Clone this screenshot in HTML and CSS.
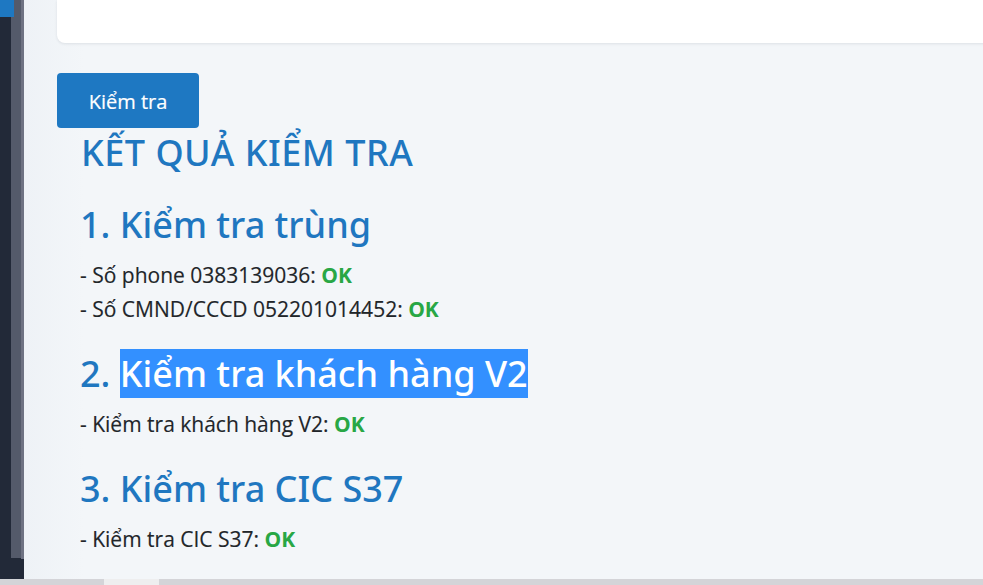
FILE: index.html
```html
<!DOCTYPE html>
<html lang="vi">
<head>
<meta charset="utf-8">
<title>Kết quả kiểm tra</title>
<link rel="stylesheet" href="styles.css">
</head>
<body>
<div class="app">
  <aside class="sidebar">
    <div class="sb-dark">
      <div class="sb-logo"></div>
    </div>
    <div class="sb-track"></div>
    <div class="sb-edge"></div>
  </aside>
  <main class="main">
    <div class="card"></div>
    <button class="btn" type="button">Kiểm tra</button>
    <section class="results">
      <h2 class="title">KẾT QUẢ KIỂM TRA</h2>
      <h3 class="sec">1. Kiểm tra trùng</h3>
      <div class="line">- Số phone 0383139036: <b class="ok">OK</b></div>
      <div class="line">- Số CMND/CCCD 052201014452: <b class="ok">OK</b></div>
      <h3 class="sec">2. <span class="sel">Kiểm tra khách hàng V2</span></h3>
      <div class="line">- Kiểm tra khách hàng V2: <b class="ok">OK</b></div>
      <h3 class="sec">3. Kiểm tra CIC S37</h3>
      <div class="line">- Kiểm tra CIC S37: <b class="ok">OK</b></div>
    </section>
  </main>
</div>
<div class="hscroll"><div class="hthumb"></div></div>
</body>
</html>
```
FILE: styles.css
```css
html, body {
  margin: 0;
  padding: 0;
  height: 100%;
  overflow: hidden;
}
body {
  background: #f3f6f9;
  font-family: "Open Sans", "Noto Sans", sans-serif;
  color: #212529;
}
.app {
  display: flex;
  height: 579px;
  overflow: hidden;
}
.sidebar {
  display: flex;
  width: 24px;
  flex: none;
  background: #222938;
  height: 579px;
}
.sb-dark {
  width: 11px;
  position: relative;
}
.sb-logo {
  position: absolute;
  left: 0;
  top: 0;
  width: 14px;
  height: 17px;
  background: #1e78c2;
  z-index: 2;
}
.sb-track {
  width: 10px;
  height: 558px;
  background: #545a6a;
}
.sb-edge {
  width: 3px;
  height: 559px;
  background: #6e7282;
}
.main {
  flex: 1;
  min-width: 0;
  padding-left: 33px;
  background: linear-gradient(90deg, #eef2f6 0, #f3f6f9 60px);
}
.card {
  height: 43px;
  margin-right: -20px;
  background: #fff;
  border-bottom-left-radius: 8px;
  box-shadow: 0 1px 3px rgba(30, 40, 60, 0.10);
}
.btn {
  display: block;
  margin-top: 30px;
  width: 142px;
  height: 55px;
  border: 0;
  border-radius: 4px;
  background: #1e78c2;
  color: #fff;
  font-family: "Open Sans", "Noto Sans", sans-serif;
  font-size: 20px;
  padding: 0;
  padding-top: 2px;
  -webkit-text-stroke: 0.2px #fff;
}
.results {
  padding-left: 23px;
  margin-top: 1px;
}
.title, .sec {
  margin: 0;
  font-family: "Noto Sans", "Open Sans", sans-serif;
  font-size: 36px;
  line-height: 48px;
  font-weight: 500;
  color: #1f77c0;
  white-space: nowrap;
}
.title {
  padding-left: 1px;
  letter-spacing: 0.5px;
}
.sec {
  margin-top: 24px;
  margin-bottom: 9px;
}
.line {
  font-size: 21px;
  line-height: 34px;
  -webkit-text-stroke: 0.15px #212529;
}
.ok {
  color: #28a745;
  font-weight: 700;
  -webkit-text-stroke: 0;
}
.sel {
  background: #3390ff;
  color: #fff;
}
.hscroll {
  height: 6px;
  background: #d4d4d8;
  position: relative;
}
.hthumb {
  position: absolute;
  left: 104px;
  top: 0;
  width: 55px;
  height: 6px;
  background: #eeeeef;
}
```
